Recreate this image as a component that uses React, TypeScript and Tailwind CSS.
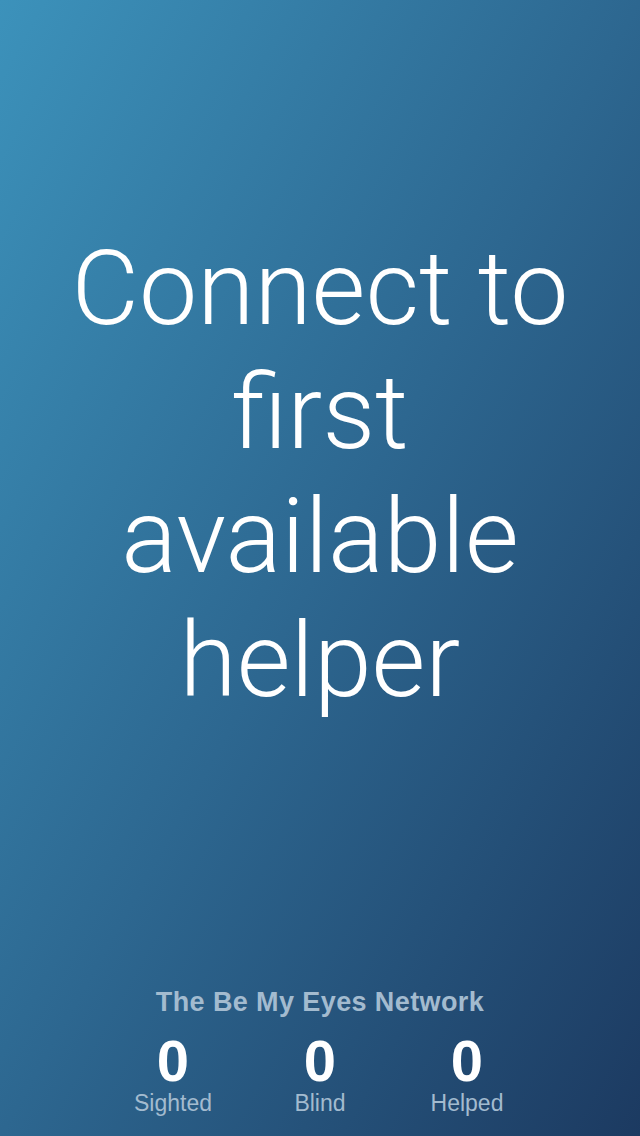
export default function App() {
  const stats = [
    { value: 0, label: 'Sighted' },
    { value: 0, label: 'Blind' },
    { value: 0, label: 'Helped' },
  ];

  return (
    <div className="w-[640px] h-[1136px] flex flex-col items-center bg-[linear-gradient(to_bottom_right,#3c92bb_0%,#2d6790_50%,#1c3a61_100%)] font-['Roboto',sans-serif] text-white overflow-hidden">
      {/* Main call-to-action */}
      <div className="flex-1 flex items-center justify-center pb-[44px]">
        <h1 className="text-center text-[104px] leading-[124px] font-light">
          Connect to
          <br />
          first
          <br />
          available
          <br />
          helper
        </h1>
      </div>

      {/* Network stats */}
      <div className="flex flex-col items-center pb-[20px] font-['Liberation_Sans',sans-serif]">
        <p className="text-[27px] leading-[32px] font-bold tracking-[0.4px] text-[#a3bbcf] -mt-[8px]">
          The Be My Eyes Network
        </p>
        <div className="flex mt-[14px]">
          {stats.map((s) => (
            <div key={s.label} className="w-[147px] flex flex-col items-center">
              <span className="text-[58px] leading-[58px] font-bold">
                {s.value}
              </span>
              <span className="text-[23px] leading-[26px] text-[#a3bbcf]">
                {s.label}
              </span>
            </div>
          ))}
        </div>
      </div>
    </div>
  );
}
